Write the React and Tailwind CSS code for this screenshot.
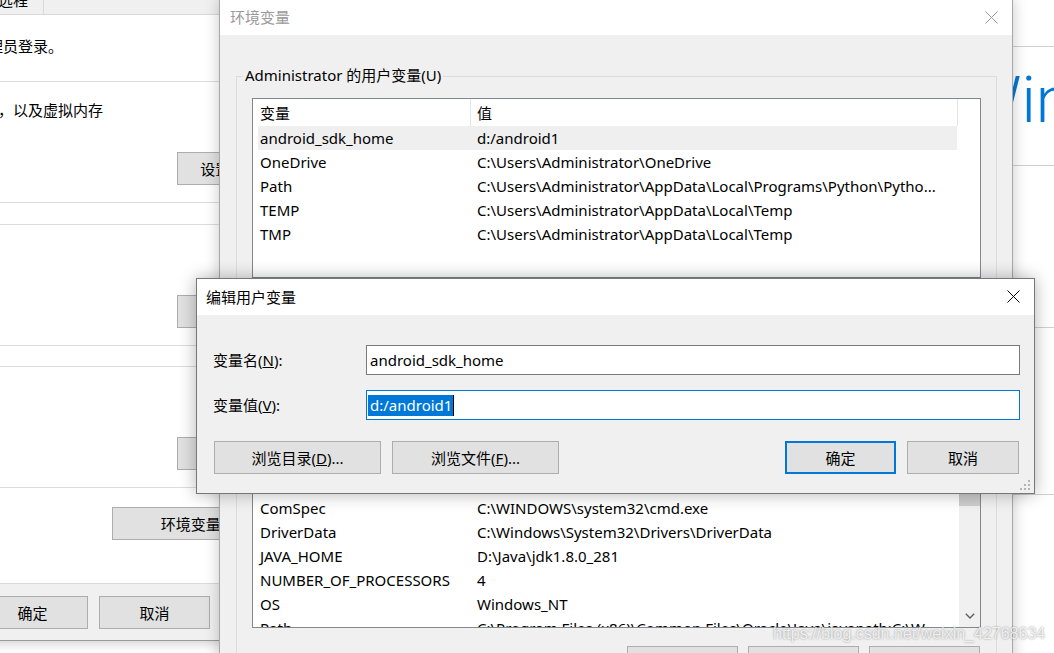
import React from "react";

const F = "font-['Noto_Sans','Noto_Sans_CJK_SC',sans-serif]";

function Btn({ children, className = "" }) {
  return (
    <div
      className={`flex h-[33px] shrink-0 items-center justify-center bg-[#e1e1e1] text-[15px] leading-[20px] text-black whitespace-nowrap ${className}`}
    >
      {children}
    </div>
  );
}

function XIcon({ color }) {
  return (
    <svg width="13" height="13" viewBox="0 0 13 13" className="shrink-0">
      <path d="M0.5 0.5L12.5 12.5M12.5 0.5L0.5 12.5" stroke={color} strokeWidth="1" fill="none" />
    </svg>
  );
}

function Row({ name, value, selected }) {
  return (
    <div className={`flex h-[24px] w-[699px] shrink-0 items-center ${selected ? "bg-[#efefef]" : ""}`}>
      <div className="w-[212px] shrink-0 overflow-hidden whitespace-nowrap pl-[2px]">{name}</div>
      <div className="min-w-0 flex-1 overflow-hidden whitespace-nowrap pl-[7px]">{value}</div>
    </div>
  );
}

function Header() {
  return (
    <div className="flex h-[27px] w-[705px] shrink-0 bg-white">
      <div className="flex w-[218px] shrink-0 items-center border-r border-[#e5e5e5] pl-[7px]">变量</div>
      <div className="flex w-[487px] shrink-0 items-center border-r border-[#e5e5e5] pl-[6px]">值</div>
    </div>
  );
}

const userVars = [
  ["android_sdk_home", "d:/android1", true],
  ["OneDrive", "C:\\Users\\Administrator\\OneDrive"],
  ["Path", "C:\\Users\\Administrator\\AppData\\Local\\Programs\\Python\\Pytho..."],
  ["TEMP", "C:\\Users\\Administrator\\AppData\\Local\\Temp"],
  ["TMP", "C:\\Users\\Administrator\\AppData\\Local\\Temp"],
];

const sysVars = [
  ["ANDROID_AVD_HOME", "D:\\Android\\avd"],
  ["ANDROID_SDK_ROOT", "D:\\Android\\Sdk"],
  ["CLASSPATH", ".;%JAVA_HOME%\\lib\\dt.jar;%JAVA_HOME%\\lib\\tools.jar"],
  ["ANDROID_HOME", "D:\\Android_SDK"],
  ["ComSpec", "C:\\WINDOWS\\system32\\cmd.exe"],
  ["DriverData", "C:\\Windows\\System32\\Drivers\\DriverData"],
  ["JAVA_HOME", "D:\\Java\\jdk1.8.0_281"],
  ["NUMBER_OF_PROCESSORS", "4"],
  ["OS", "Windows_NT"],
  ["Path", "C:\\Program Files (x86)\\Common Files\\Oracle\\Java\\javapath;C:\\W..."],
  ["PATHEXT", ".COM;.EXE;.BAT;.CMD;.VBS;.VBE;.JS;.JSE;.WSF;.WSH;.MSC"],
];

export default function App() {
  return (
    <div className={`relative h-[653px] w-[1054px] overflow-hidden bg-white text-[15px] leading-[20px] text-black ${F}`}>
      {/* background settings window (right) */}
      <div className="absolute left-[900px] top-0 flex h-[653px] w-[200px] flex-col bg-white">
        <div className="h-[47px] shrink-0 border-b border-[#d0d0d0]" />
        <div className="h-[119px] shrink-0 border-b border-[#d0d0d0] pl-[64px] pt-[22px]">
          <div className="whitespace-nowrap font-['Roboto',sans-serif] text-[64px] font-light leading-[64px] text-[#0078d7]">
            Windows 10
          </div>
        </div>
        <div className="h-[162px] shrink-0 border-b border-[#d0d0d0]" />
        <div className="h-[167px] shrink-0 border-b border-[#d0d0d0]" />
      </div>

      {/* system properties window (left) */}
      <div className="absolute left-[-260px] top-0 flex h-[641px] w-[604px] flex-col border-b border-[#9a9a9a] bg-[#f0f0f0] shadow-[0_3px_10px_rgba(0,0,0,0.18)]">
        <div className="flex h-[15px] shrink-0 overflow-hidden border-b border-[#d9d9d9] pl-[258px]">
          <div className="h-full border-r border-[#d9d9d9] pr-[15px]">
            <div className="-mt-[10px] leading-[20px]">远程</div>
          </div>
        </div>
        <div className="flex flex-1 flex-col border-b border-[#d9d9d9] bg-white">
          <div className="mt-[21px] whitespace-nowrap pl-[23px]">要进行大多数更改，你必须作为管理员登录。</div>
          <div className="mx-[10px] mt-[25px] flex flex-col border border-[#dcdcdc] pb-[17px] pt-[18px]">
            <div className="whitespace-nowrap pl-[22px]">视觉效果，处理器计划，内存使用，以及虚拟内存</div>
            <div className="mt-[32px] flex justify-end pr-[50px]">
              <Btn className="w-[106px] border border-[#adadad]">设置(S)...</Btn>
            </div>
          </div>
          <div className="mx-[10px] mt-[21px] flex flex-col border border-[#dcdcdc] pb-[17px] pt-[70px]">
            <div className="flex justify-end pr-[50px]">
              <Btn className="w-[106px] border border-[#adadad]">设置(E)...</Btn>
            </div>
          </div>
          <div className="mx-[10px] mt-[20px] flex flex-col border border-[#dcdcdc] pb-[17px] pt-[70px]">
            <div className="flex justify-end pr-[50px]">
              <Btn className="w-[106px] border border-[#adadad]">设置(T)...</Btn>
            </div>
          </div>
          <div className="mt-[19px] flex justify-end pr-[42px]">
            <Btn className="w-[190px] border border-[#adadad]">环境变量(N)...</Btn>
          </div>
        </div>
        <div className="flex h-[56px] shrink-0 justify-end gap-[11px] pr-[12px] pt-[12px]">
          <Btn className="w-[111px] border border-[#adadad]">确定</Btn>
          <Btn className="w-[111px] border border-[#adadad]">取消</Btn>
          <Btn className="w-[111px] border border-[#adadad]">应用(A)</Btn>
        </div>
      </div>

      {/* environment variables dialog */}
      <div className="absolute left-[219px] top-[-1px] flex h-[720px] w-[794px] flex-col border border-[#a8a8a8] bg-[#f0f0f0] shadow-[0_0_14px_rgba(0,0,0,0.22)]">
        <div className="flex h-[35px] shrink-0 items-center justify-between bg-white pb-[1px] pl-[10px] pr-[14px]">
          <span className="text-[#9a9a9a]">环境变量</span>
          <XIcon color="#9a9a9a" />
        </div>
        <div className="flex flex-col">
          {/* user vars group */}
          <div className="relative ml-[16px] mr-[15px] mt-[41px] flex flex-col border border-[#dcdcdc] px-[15px] pb-[11px] pt-[21px]">
            <span className="absolute left-[6px] top-[-12px] whitespace-nowrap bg-[#f0f0f0] px-[2px] leading-[20px]">
              Administrator 的用户变量(U)
            </span>
            <div className="flex h-[180px] flex-col overflow-hidden border border-[#828790] bg-white">
              <Header />
              <div className="ml-[5px] flex flex-col">
                {userVars.map(([n, v, s]) => (
                  <Row key={n} name={n} value={v} selected={s} />
                ))}
              </div>
            </div>
            <div className="mt-[12px] flex justify-end gap-[10px] pr-[1px]">
              <Btn className="w-[111px] border border-[#adadad]">新建(N)...</Btn>
              <Btn className="w-[111px] border border-[#adadad]">编辑(E)...</Btn>
              <Btn className="w-[111px] border border-[#adadad]">删除(D)</Btn>
            </div>
          </div>
          {/* system vars group */}
          <div className="relative ml-[16px] mr-[15px] mt-[15px] flex flex-col border border-[#dcdcdc] px-[15px] pb-[11px] pt-[21px]">
            <span className="absolute left-[6px] top-[-12px] whitespace-nowrap bg-[#f0f0f0] px-[2px] leading-[20px]">
              系统变量(S)
            </span>
            <div className="flex h-[256px] overflow-hidden border border-[#828790] bg-white">
              <div className="flex min-w-0 flex-1 flex-col overflow-hidden">
                <Header />
                <div className="ml-[5px] flex flex-col">
                  {sysVars.map(([n, v]) => (
                    <Row key={n + v} name={n} value={v} />
                  ))}
                </div>
              </div>
              <div className="flex w-[21px] shrink-0 flex-col bg-[#f0f0f0]">
                <div className="h-[17px] shrink-0" />
                <div className="h-[116px] shrink-0 bg-[#cdcdcd]" />
                <div className="flex-1" />
                <div className="flex h-[22px] shrink-0 items-center justify-center">
                  <svg width="10" height="6" viewBox="0 0 10 6">
                    <path d="M0.8 0.8L5 5L9.2 0.8" stroke="#606060" strokeWidth="1.4" fill="none" />
                  </svg>
                </div>
              </div>
            </div>
            <div className="mt-[18px] flex justify-end gap-[10px] pr-[1px]">
              <Btn className="w-[111px] border border-[#adadad]">新建(W)...</Btn>
              <Btn className="w-[111px] border border-[#adadad]">编辑(I)...</Btn>
              <Btn className="w-[111px] border border-[#adadad]">删除(L)</Btn>
            </div>
          </div>
        </div>
      </div>

      {/* edit user variable dialog */}
      <div className="absolute left-[196px] top-[278px] flex h-[216px] w-[839px] flex-col border border-[#777777] bg-[#f0f0f0] shadow-[0_0_16px_rgba(0,0,0,0.3)]">
        <div className="flex h-[36px] shrink-0 items-center justify-between bg-white pb-[1px] pl-[9px] pr-[14px]">
          <span>编辑用户变量</span>
          <XIcon color="#000000" />
        </div>
        <div className="relative flex flex-1 flex-col pl-[16px] pr-[14px] pt-[30px]">
          <div className="flex h-[30px] items-center">
            <div className="w-[153px] shrink-0 whitespace-nowrap pb-[1px]">
              变量名(<span className="underline underline-offset-1">N</span>):
            </div>
            <div className="flex h-[30px] flex-1 items-center border border-[#7a7a7a] bg-white pl-[3px]">
              android_sdk_home
            </div>
          </div>
          <div className="mt-[15px] flex h-[30px] items-center">
            <div className="w-[153px] shrink-0 whitespace-nowrap pb-[1px]">
              变量值(<span className="underline underline-offset-1">V</span>):
            </div>
            <div className="flex h-[30px] flex-1 items-center border border-[#0078d7] bg-white pl-[1px]">
              <span className="flex h-[21px] items-center bg-[#0078d7] pl-[2px] pr-[1px] text-white">d:/android1</span>
              <span className="h-[21px] w-[1px] bg-black" />
            </div>
          </div>
          <div className="mt-[21px] flex">
            <Btn className="ml-[1px] w-[167px] border border-[#adadad]">
              浏览目录(<span className="underline underline-offset-1">D</span>)...
            </Btn>
            <Btn className="ml-[11px] w-[167px] border border-[#adadad]">
              浏览文件(<span className="underline underline-offset-1">F</span>)...
            </Btn>
            <div className="flex-1" />
            <Btn className="w-[111px] border-2 border-[#0078d7]">确定</Btn>
            <Btn className="ml-[11px] mr-[1px] w-[112px] border border-[#adadad]">取消</Btn>
          </div>
          <svg width="11" height="11" viewBox="0 0 11 11" className="absolute bottom-[2px] right-[3px]">
            <g fill="#b4b4b4">
              <rect x="8" y="0" width="2" height="2" />
              <rect x="4" y="4" width="2" height="2" />
              <rect x="8" y="4" width="2" height="2" />
              <rect x="0" y="8" width="2" height="2" />
              <rect x="4" y="8" width="2" height="2" />
              <rect x="8" y="8" width="2" height="2" />
            </g>
          </svg>
        </div>
      </div>

      {/* watermark */}
      <div className="absolute left-[773px] top-[624px] whitespace-nowrap font-['Liberation_Sans',sans-serif] text-[16px] leading-[20px] text-white/80 [text-shadow:0_0_2px_rgba(0,0,0,0.45)]">
        https://blog.csdn.net/weixin_42768634
      </div>
    </div>
  );
}
